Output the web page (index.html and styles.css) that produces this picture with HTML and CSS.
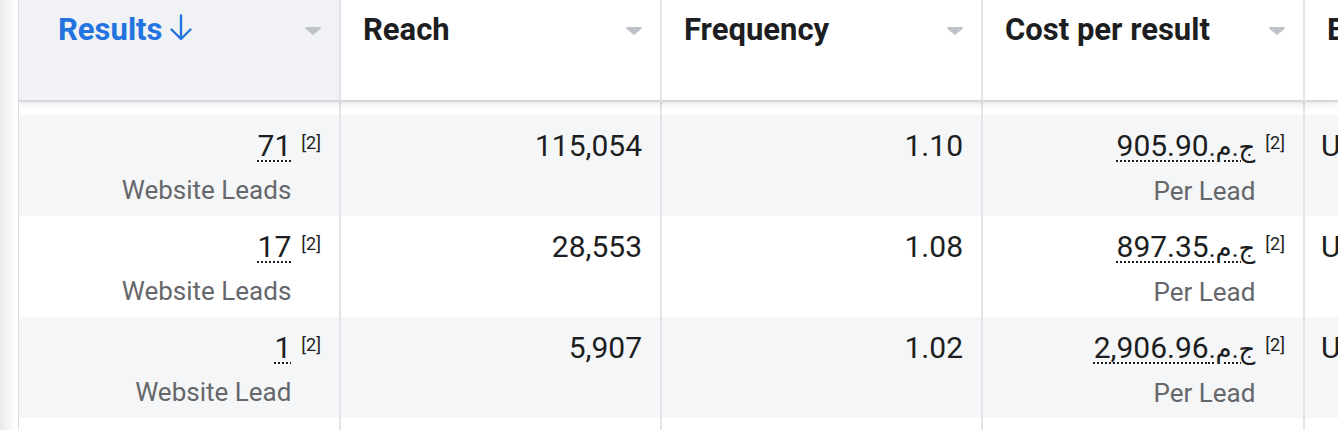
FILE: index.html
```html
<!DOCTYPE html>
<html lang="en">
<head>
<meta charset="utf-8">
<title>Ads table</title>
<link rel="stylesheet" href="styles.css">
</head>
<body>
<div class="page">
  <div class="strip"></div>
  <div class="table">
    <div class="row head">
      <div class="hcell sorted">
        <span class="htitle blue">Results
          <svg class="arrow" width="24" height="27" viewBox="0 0 24 27"><path d="M12 1.5V25M2.5 15.5L12 25l9.5-9.5" fill="none" stroke="currentColor" stroke-width="2.4" stroke-linecap="round" stroke-linejoin="round"/></svg>
        </span>
        <svg class="tri" width="16" height="8" viewBox="0 0 16 8"><path d="M1.2 0h13.6c1 0 1.5 1.1.8 1.8L8.8 7.4c-.4.4-1.2.4-1.6 0L.4 1.8C-.3 1.1.2 0 1.2 0z" fill="#bec3c9"/></svg>
      </div>
      <div class="hcell">
        <span class="htitle">Reach</span>
        <svg class="tri" width="16" height="8" viewBox="0 0 16 8"><path d="M1.2 0h13.6c1 0 1.5 1.1.8 1.8L8.8 7.4c-.4.4-1.2.4-1.6 0L.4 1.8C-.3 1.1.2 0 1.2 0z" fill="#bec3c9"/></svg>
      </div>
      <div class="hcell">
        <span class="htitle">Frequency</span>
        <svg class="tri" width="16" height="8" viewBox="0 0 16 8"><path d="M1.2 0h13.6c1 0 1.5 1.1.8 1.8L8.8 7.4c-.4.4-1.2.4-1.6 0L.4 1.8C-.3 1.1.2 0 1.2 0z" fill="#bec3c9"/></svg>
      </div>
      <div class="hcell">
        <span class="htitle">Cost per result</span>
        <svg class="tri" width="16" height="8" viewBox="0 0 16 8"><path d="M1.2 0h13.6c1 0 1.5 1.1.8 1.8L8.8 7.4c-.4.4-1.2.4-1.6 0L.4 1.8C-.3 1.1.2 0 1.2 0z" fill="#bec3c9"/></svg>
      </div>
      <div class="hcell last">
        <span class="htitle">Budget</span>
      </div>
    </div>

    <div class="row stub">
      <div class="cell"></div><div class="cell"></div><div class="cell"></div><div class="cell"></div><div class="cell last"></div>
    </div>

    <div class="row data alt">
      <div class="cell num"><div class="stack"><span class="val dotted">71</span><span class="sub">Website Leads</span></div><sup class="note">[2]</sup></div>
      <div class="cell num"><span class="val">115,054</span></div>
      <div class="cell num"><span class="val">1.10</span></div>
      <div class="cell num"><div class="stack"><span class="val dotted"><bdo dir="ltr">905.90<span class="cur">.م.ج</span></bdo></span><span class="sub">Per Lead</span></div><sup class="note">[2]</sup></div>
      <div class="cell last"><span class="val">Using ad set budget</span></div>
    </div>

    <div class="row data">
      <div class="cell num"><div class="stack"><span class="val dotted">17</span><span class="sub">Website Leads</span></div><sup class="note">[2]</sup></div>
      <div class="cell num"><span class="val">28,553</span></div>
      <div class="cell num"><span class="val">1.08</span></div>
      <div class="cell num"><div class="stack"><span class="val dotted"><bdo dir="ltr">897.35<span class="cur">.م.ج</span></bdo></span><span class="sub">Per Lead</span></div><sup class="note">[2]</sup></div>
      <div class="cell last"><span class="val">Using ad set budget</span></div>
    </div>

    <div class="row data alt">
      <div class="cell num"><div class="stack"><span class="val dotted">1</span><span class="sub">Website Lead</span></div><sup class="note">[2]</sup></div>
      <div class="cell num"><span class="val">5,907</span></div>
      <div class="cell num"><span class="val">1.02</span></div>
      <div class="cell num"><div class="stack"><span class="val dotted"><bdo dir="ltr">2,906.96<span class="cur">.م.ج</span></bdo></span><span class="sub">Per Lead</span></div><sup class="note">[2]</sup></div>
      <div class="cell last"><span class="val">Using ad set budget</span></div>
    </div>

    <div class="row data">
      <div class="cell"></div><div class="cell"></div><div class="cell"></div><div class="cell"></div><div class="cell last"></div>
    </div>
  </div>
</div>
</body>
</html>
```

FILE: styles.css
```css
* { box-sizing: border-box; }

html, body {
  margin: 0;
  padding: 0;
  background: #ffffff;
}

body {
  width: 1338px;
  height: 430px;
  overflow: hidden;
  font-family: Roboto, "DejaVu Sans", "Noto Sans", sans-serif;
  color: #1c1e21;
}

.page {
  display: flex;
  height: 430px;
  overflow: hidden;
}

.strip {
  flex: 0 0 19px;
  border-right: 1px solid #dadde1;
  background: linear-gradient(90deg, #e9eaeb 0, #f6f6f6 9px, #ffffff 15px);
}

.table {
  flex: 1 1 auto;
  min-width: 0;
  overflow: hidden;
}

.row {
  display: grid;
  grid-template-columns: 322px 321px 321px 322px 1fr;
}

.head {
  position: relative;
  z-index: 1;
  box-shadow: 0 2px 7px rgba(0, 0, 0, 0.1);
  background: #ffffff;
}

.hcell {
  height: 102px;
  border-right: 2px solid #e2e4e7;
  border-bottom: 2px solid #d6d8db;
  display: flex;
  justify-content: space-between;
  align-items: flex-start;
  padding: 11px 18px 0 22px;
  white-space: nowrap;
  overflow: hidden;
}

.hcell.sorted {
  background: #f0f2f5;
  padding-left: 39px;
}

.hcell.last,
.cell.last {
  border-right: none;
}

.htitle {
  display: flex;
  align-items: flex-start;
  gap: 6px;
  font-size: 31px;
  line-height: 37px;
  font-weight: 700;
  color: #1c1e21;
}

.htitle.blue {
  color: #2374e1;
}

.arrow {
  margin-top: 3px;
  color: #2374e1;
}

.tri {
  margin-top: 16px;
  flex: 0 0 auto;
}

.stub {
  height: 13px;
}

.data {
  height: 101px;
}

.alt {
  background: #f5f6f7;
}

.cell {
  border-right: 2px solid #e2e4e7;
  padding: 13px 18px 0 16px;
  white-space: nowrap;
  overflow: hidden;
}

.cell.num {
  display: flex;
  justify-content: flex-end;
  align-items: flex-start;
}

.stack {
  display: flex;
  flex-direction: column;
  align-items: flex-end;
}

.val {
  font-size: 30px;
  line-height: 36px;
  color: #1c1e21;
}

.cur {
  font-size: 26px;
}

.dotted {
  text-decoration: underline dotted #1c1e21 2px;
  text-underline-offset: 4px;
}

.sub {
  margin-top: 10px;
  font-size: 26px;
  line-height: 32px;
  color: #65676b;
}

.note {
  font-size: 18px;
  line-height: 18px;
  margin: 6px 0 0 10px;
  vertical-align: baseline;
  color: #1c1e21;
}
```
